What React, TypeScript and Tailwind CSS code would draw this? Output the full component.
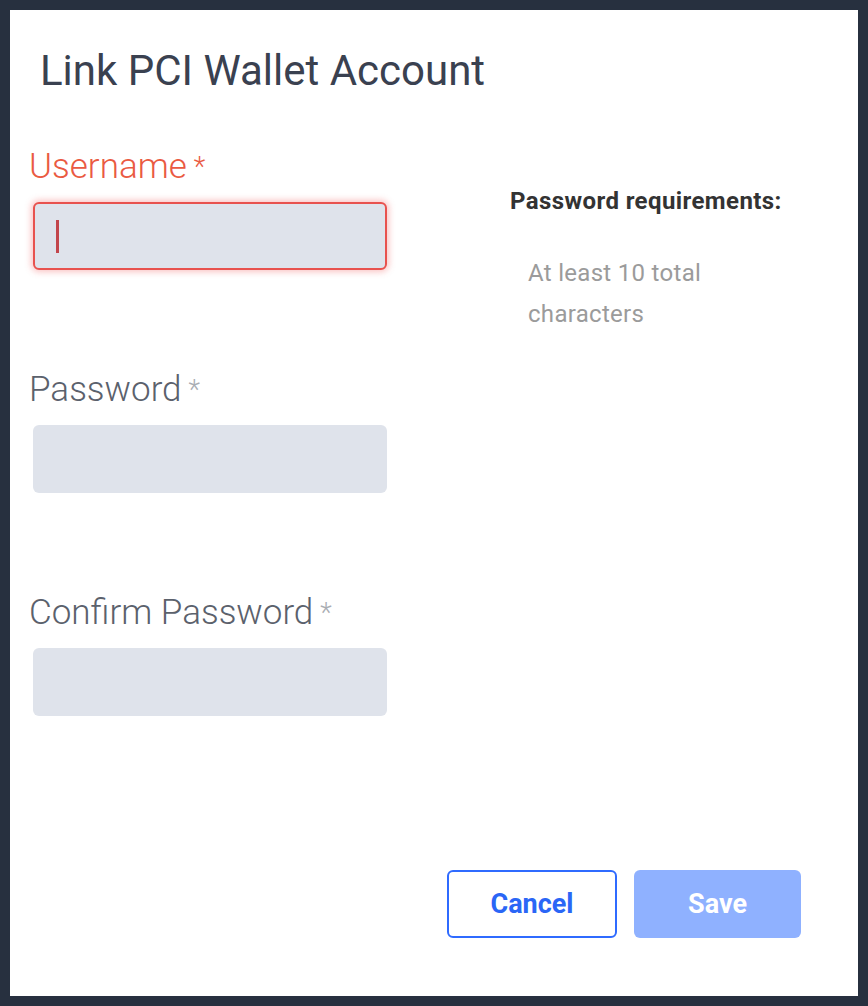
import React from "react";

const font = { fontFamily: "Roboto, 'Noto Sans', sans-serif" };

function Field({ label, active }: { label: string; active?: boolean }) {
  return (
    <div className="flex flex-col">
      <div
        className={`h-[40px] pt-[2px] text-[35px] leading-[40px] font-light ${
          active ? "text-[#ea5a42]" : "text-[#5b616c]"
        }`}
      >
        {label}
        <span
          className={`ml-[7px] text-[27px] align-top ${
            active ? "text-[#ea5a42]" : "text-[#a9adb3]"
          }`}
        >
          *
        </span>
      </div>
      <div
        className={`mt-[17px] ml-[4px] h-[68px] w-[354px] rounded-[6px] bg-[#dfe3eb] flex items-center ${
          active
            ? "border-2 border-[#e8524e] shadow-[0_0_6px_2px_rgba(240,90,90,0.35)]"
            : ""
        }`}
      >
        {active && <div className="ml-[21px] h-[33px] w-[3px] bg-[#c2454b]" />}
      </div>
    </div>
  );
}

export default function App() {
  return (
    <div className="min-h-screen w-full bg-[#27303f] p-[10px]" style={font}>
      <div className="flex h-[986px] flex-col bg-white">
        <div className="pl-[30px] pt-[37px] h-[85px] text-[42px] leading-[48px] text-[#3a4150]">
          Link PCI Wallet Account
        </div>
        <div className="mt-[50px] flex">
          <div className="pl-[19px] w-[500px] flex flex-col gap-[98px]">
            <Field label="Username" active />
            <Field label="Password" />
            <Field label="Confirm Password" />
          </div>
          <div className="mt-[42px] flex flex-col">
            <div className="text-[24px] leading-[28px] tracking-[0.4px] font-bold text-[#333333]">
              Password requirements:
            </div>
            <div className="mt-[38px] ml-[18px] w-[220px] text-[24px] leading-[41px] tracking-[0.3px] text-[#9b9b9b]">
              At least 10 total characters
            </div>
          </div>
        </div>
        <div className="mt-auto mb-[58px] mr-[57px] flex justify-end gap-[17px]">
          <button className="h-[68px] w-[170px] rounded-[6px] border-2 border-[#2f6bff] bg-white text-[27px] font-bold text-[#2a66f6]">
            Cancel
          </button>
          <button className="h-[68px] w-[167px] rounded-[6px] bg-[#8fb1ff] text-[27px] font-bold text-white">
            Save
          </button>
        </div>
      </div>
    </div>
  );
}
